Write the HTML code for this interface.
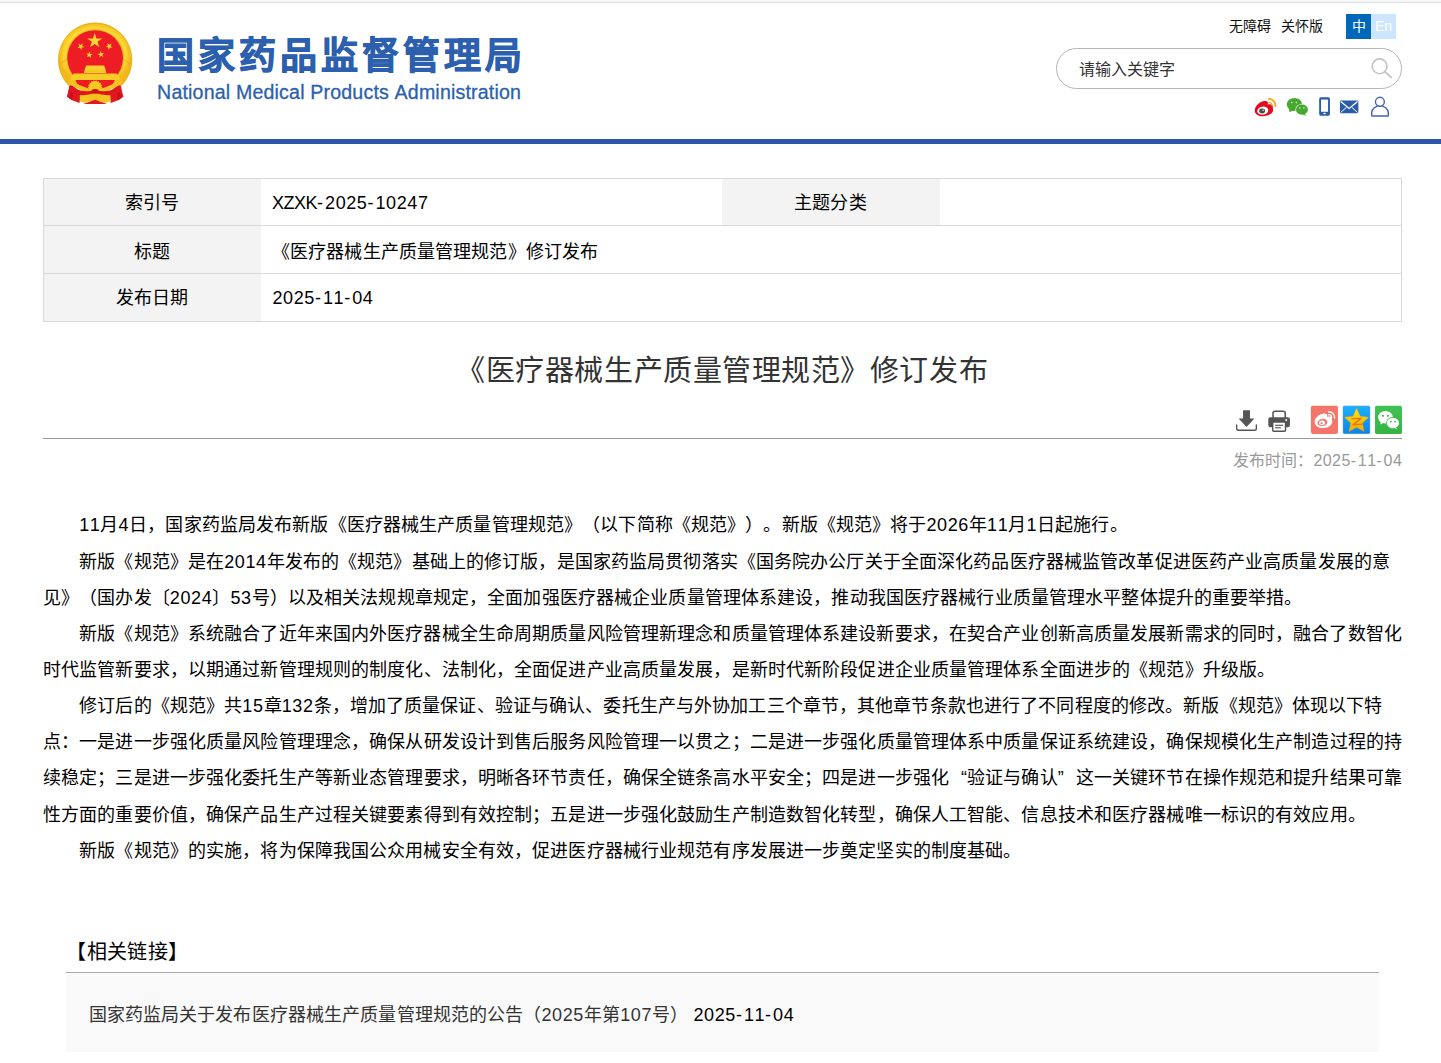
<!DOCTYPE html>
<html lang="zh-CN">
<head>
<meta charset="utf-8">
<title>《医疗器械生产质量管理规范》修订发布</title>
<style>
html,body{margin:0;padding:0;background:#fff;}
body{width:1441px;height:1063px;position:relative;overflow:hidden;font-family:"Liberation Sans",sans-serif;color:#000;font-size:18px;}
.abs{position:absolute;white-space:nowrap;text-spacing-trim:space-all;font-kerning:none;}
.d{letter-spacing:0.6px;}
.h{letter-spacing:2px;}
.L{letter-spacing:-0.5px;}
/* top strip */
#strip1{left:0;top:0;width:1441px;height:2px;background:#f6f7f9;}
#strip2{left:0;top:2px;width:1441px;height:1px;background:#dcdde1;}
/* header */
#logo-cn{left:157px;top:29.2px;font-size:37px;line-height:56px;font-weight:bold;color:#2c5fae;letter-spacing:4px;-webkit-text-stroke:0.9px #2c5fae;}
#logo-en{left:157.1px;top:81.4px;font-size:19.6px;line-height:22px;color:#2c5fae;letter-spacing:0.17px;-webkit-text-stroke:0.3px #2c5fae;}
#lnk1{left:1229px;top:15px;font-size:14px;line-height:22px;color:#111;}
#lnk2{left:1281px;top:15px;font-size:14px;line-height:22px;color:#111;}
#zh{left:1346px;top:14px;width:25px;height:25px;background:#0068b7;color:#fff;font-size:14px;line-height:25px;text-align:center;}
#en{left:1371px;top:14px;width:25px;height:25px;background:#cce6ff;color:#fff;font-size:14px;line-height:25px;text-align:center;}
#search{left:1056px;top:48px;width:344px;height:39px;border:1px solid #b5b5b5;border-radius:21px;background:#fff;}
#search-ph{left:1079px;top:59.3px;font-size:16px;line-height:22px;color:#333;}
#blueline{left:0;top:139px;width:1441px;height:5px;background:#2a57a9;}
/* table */
#tbl{left:43px;top:178px;width:1357px;height:142px;border:1px solid #d9d9d9;background:#fff;}
.labbg{background:#f3f3f3;}
.lab{text-align:center;font-size:18px;line-height:46px;height:46px;color:#000;letter-spacing:0.12px;}
.val{font-size:18px;line-height:46px;height:46px;color:#000;letter-spacing:0.12px;}
.hl{height:1px;background:#d9d9d9;left:44px;width:1357px;}
/* title */
#title{left:0;top:348.8px;width:1444.4px;text-align:center;font-size:29px;line-height:44px;color:#333;letter-spacing:0.55px;}
#hr{left:43px;top:438px;width:1359px;height:1px;background:#999;}
#pub{left:1202px;top:449.6px;width:200.3px;text-align:right;font-size:16px;line-height:22px;color:#999;}
#pub .d{letter-spacing:0.45px;}
#pub .h{letter-spacing:1.7px;}
/* body lines */
.ln{left:43px;letter-spacing:0.12px;font-size:18px;line-height:36px;height:36px;color:#000;}
.ind{padding-left:36.24px;}
.q{display:inline-block;width:18.12px;text-align-last:auto;}
/* related */
#rel-h{left:66.4px;top:936.8px;font-size:20px;line-height:30px;color:#000;letter-spacing:0.3px;}
#rel-line{left:66px;top:972px;width:1313px;height:1px;background:#aaa;}
#rel-box{left:66px;top:973px;width:1313px;height:79px;background:#f9f9f9;}
#rel-a{left:88.5px;top:996.8px;font-size:18px;line-height:36px;color:#333;letter-spacing:0.12px;}
#rel-a b{font-weight:normal;color:#000;}
/* baked extents */
#L1{left:42.994px !important;width:1048.138px !important;text-align:justify !important;text-align-last:justify !important;}
#L2{left:42.994px !important;width:1310.575px !important;text-align:justify !important;text-align-last:justify !important;}
#L3{left:43.000px !important;width:1259.325px !important;text-align:justify !important;text-align-last:justify !important;}
#L4{left:42.994px !important;width:1322.466px !important;text-align:justify !important;text-align-last:justify !important;}
#L5{left:43.000px !important;width:1231.872px !important;text-align:justify !important;text-align-last:justify !important;}
#L6{left:42.994px !important;width:1303.091px !important;text-align:justify !important;text-align-last:justify !important;}
#L7{left:43.000px !important;width:1358.700px !important;text-align:justify !important;text-align-last:justify !important;}
#L8{left:43.000px !important;width:1358.700px !important;text-align:justify !important;text-align-last:justify !important;}
#L9{left:43.000px !important;width:1322.466px !important;text-align:justify !important;text-align-last:justify !important;}
#L10{left:42.994px !important;width:941.950px !important;text-align:justify !important;text-align-last:justify !important;}
#title{left:456.234px !important;width:531.606px !important;text-align:justify !important;text-align-last:justify !important;}
#rel-a{left:88.500px !important;width:705.544px !important;text-align:justify !important;text-align-last:justify !important;}
#rel-h{left:66.391px !important;width:121.513px !important;text-align:justify !important;text-align-last:justify !important;}
#logo-cn{left:157.000px !important;width:368.700px !important;text-align:justify !important;text-align-last:justify !important;}
#logo-en{left:157.094px !important;width:363.716px !important;text-align:justify !important;text-align-last:justify !important;}
#lnk1{left:1229.000px !important;width:41.700px !important;text-align:justify !important;text-align-last:justify !important;}
#lnk2{left:1281.000px !important;width:41.700px !important;text-align:justify !important;text-align-last:justify !important;}
#search-ph{left:1079.000px !important;width:95.700px !important;text-align:justify !important;text-align-last:justify !important;}
#pub{left:1233.422px !important;width:168.575px !important;text-align:justify !important;text-align-last:justify !important;}
#T1{left:124.703px !important;width:54.075px !important;text-align:justify !important;text-align-last:justify !important;}
#T2{left:272.000px !important;width:156.231px !important;text-align:justify !important;text-align-last:justify !important;}
#T3{left:794.141px !important;width:72.184px !important;text-align:justify !important;text-align-last:justify !important;}
#T4{left:133.766px !important;width:35.950px !important;text-align:justify !important;text-align-last:justify !important;}
#T5{left:272.000px !important;width:325.872px !important;text-align:justify !important;text-align-last:justify !important;}
#T6{left:115.641px !important;width:72.184px !important;text-align:justify !important;text-align-last:justify !important;}
#T7{left:272.500px !important;width:100.622px !important;text-align:justify !important;text-align-last:justify !important;}
</style>
</head>
<body>
<div class="abs" id="strip1"></div><div class="abs" id="strip2"></div>

<!--EMBLEM_START--><svg class="abs" id="emblem" style="left:50px;top:15px;width:90px;height:95px" viewBox="0 0 1007 1063">
<defs>
<radialGradient id="gr" cx="50%" cy="50%" r="50%"><stop offset="0.72" stop-color="#f6c21c"/><stop offset="0.8" stop-color="#fbd93a"/><stop offset="0.9" stop-color="#f7cb26"/><stop offset="1" stop-color="#f2b71a"/></radialGradient>
</defs>
<!-- ribbons behind -->
<path d="M225 770 L188 915 L240 950 L330 985 L345 860 Z" fill="#e2181f"/>
<path d="M782 770 L822 915 L770 950 L680 985 L665 860 Z" fill="#e2181f"/>
<path d="M235 800 L215 930 L250 950 L262 830Z" fill="#c9101a"/>
<path d="M775 800 L795 930 L760 950 L748 830Z" fill="#c9101a"/>
<!-- gold ring -->
<path d="M505 85 A415 415 0 0 1 800 790 L210 790 A415 415 0 0 1 505 85Z" fill="url(#gr)"/>
<path d="M211 790 A411 411 0 1 1 799 790" fill="none" stroke="#e6a818" stroke-width="9" opacity="0.75"/><circle cx="505" cy="482" r="318" fill="none" stroke="#e9ae1a" stroke-width="10" opacity="0.8"/><path d="M150 300 L112 540 M860 300 L898 540" stroke="#e9b01c" stroke-width="10" opacity="0.55" fill="none"/><path d="M105 555 L225 470 M905 555 L785 470" stroke="#e2a416" stroke-width="12" opacity="0.6" fill="none"/>
<!-- red disk -->
<circle cx="505" cy="482" r="312" fill="#ee1c25"/>
<!-- stars -->
<polygon points="500.0,202.0 519.8,262.8 583.7,262.8 532.0,300.4 551.7,361.2 500.0,323.6 448.3,361.2 468.0,300.4 416.3,262.8 480.2,262.8" fill="#fbd52e"/>
<polygon points="366.0,315.6 359.7,345.5 386.1,360.7 355.7,363.9 349.4,393.8 337.0,365.9 306.6,369.1 329.3,348.7 316.9,320.8 343.3,336.0" fill="#fbd52e"/>
<polygon points="641.0,313.6 663.7,334.0 690.1,318.8 677.7,346.7 700.4,367.1 670.0,363.9 657.6,391.8 651.3,361.9 620.9,358.7 647.3,343.5" fill="#fbd52e"/>
<polygon points="446.9,406.6 451.0,435.4 479.6,440.4 453.5,453.2 457.5,482.0 437.3,461.0 411.2,473.8 424.9,448.1 404.7,427.2 433.3,432.3" fill="#fbd52e"/>
<polygon points="563.1,402.6 576.7,428.3 605.3,423.2 585.1,444.1 598.8,469.8 572.7,457.0 552.5,478.0 556.5,449.2 530.4,436.4 559.0,431.4" fill="#fbd52e"/>
<!-- gate -->
<path d="M405 565 L605 565 L618 600 L630 650 L380 650 L392 600Z" fill="#f9d12c"/>
<rect x="385" y="618" width="240" height="14" fill="#eebf22"/>
<!-- base band with curved ends -->
<path d="M265 655 L745 655 Q775 680 790 730 L735 735 L275 735 L220 730 Q235 680 265 655Z" fill="#f8cb27"/>
<!-- lower red field -->
<path d="M285 728 L725 728 L690 800 L505 870 L320 800Z" fill="#ec1b24"/>
<!-- gear -->
<polygon points="589.0,812.0 573.9,824.2 583.9,840.7 565.6,847.0 569.3,866.0 550.0,865.6 547.0,884.7 528.9,877.8 519.6,894.7 505.0,882.0 490.4,894.7 481.1,877.8 463.0,884.7 460.0,865.6 440.7,866.0 444.4,847.0 426.1,840.7 436.1,824.2 421.0,812.0 436.1,799.8 426.1,783.3 444.4,777.0 440.7,758.0 460.0,758.4 463.0,739.3 481.1,746.2 490.4,729.3 505.0,742.0 519.6,729.3 528.9,746.2 547.0,739.3 550.0,758.4 569.3,758.0 565.6,777.0 583.9,783.3 573.9,799.8" fill="#f7c823"/>
<!-- gold swoosh stalks -->
<path d="M225 705 Q300 800 505 838 Q710 800 785 705 L800 760 Q700 850 505 880 Q310 850 210 760Z" fill="#f6c320"/>
<!-- lower gear and cross -->
<path d="M332 900 L430 868 L505 915 L580 868 L678 900 L674 968 L612 985 L505 945 L398 985 L336 968Z" fill="#f6c522"/>
<polygon points="585.0,905.0 571.0,916.6 580.2,932.4 563.0,938.5 566.3,956.4 548.1,956.3 545.0,974.3 527.9,968.0 518.9,983.8 505.0,972.0 491.1,983.8 482.1,968.0 465.0,974.3 461.9,956.3 443.7,956.4 447.0,938.5 429.8,932.4 439.0,916.6 425.0,905.0 439.0,893.4 429.8,877.6 447.0,871.5 443.7,853.6 461.9,853.7 465.0,835.7 482.1,842.0 491.1,826.2 505.0,838.0 518.9,826.2 527.9,842.0 545.0,835.7 548.1,853.7 566.3,853.6 563.0,871.5 580.2,877.6 571.0,893.4" fill="#f5c01e"/>
<path d="M372 995 L505 948 L638 995 Z" fill="#e3171f"/>
<!-- red ribbon centre drape -->
<path d="M215 788 Q340 882 505 838 Q670 882 795 788 L800 850 Q680 930 505 874 Q330 930 210 850Z" fill="#e0161e"/>
<path d="M468 836 Q505 822 542 836 L546 874 Q505 888 464 874Z" fill="#cf111a"/>
</svg><!--EMBLEM_END-->

<div class="abs" id="logo-cn">国家药品监督管理局</div>
<div class="abs" id="logo-en">National Medical Products Administration</div>

<div class="abs" id="lnk1">无障碍</div>
<div class="abs" id="lnk2">关怀版</div>
<div class="abs" id="zh">中</div>
<div class="abs" id="en">En</div>
<div class="abs" id="search"></div>
<div class="abs" id="search-ph">请输入关键字</div>
<!--MAG_START--><svg class="abs" id="mag" style="left:1366px;top:54px;width:30px;height:30px" viewBox="0 0 30 30">
<circle cx="13.6" cy="12.3" r="7.4" fill="none" stroke="#c4c4c4" stroke-width="1.6"/>
<path d="M19 17.8 L25.2 23.4" stroke="#c4c4c4" stroke-width="1.8" stroke-linecap="round"/>
</svg><!--MAG_END-->
<!--ICONS_START--><svg class="abs" id="icons" style="left:1245px;top:90px;width:160px;height:34px" viewBox="0 0 1441 306">
<!-- weibo -->
<path d="M88 188 C86 140 145 92 188 100 C208 104 210 118 204 132 C232 120 258 134 250 162 C268 200 222 236 165 236 C118 236 90 216 88 188Z" fill="#e60b1c"/>
<ellipse cx="160" cy="186" rx="50" ry="36" fill="#fff" transform="rotate(-8 160 186)"/>
<ellipse cx="154" cy="189" rx="27" ry="22" fill="#4a4a4a"/>
<ellipse cx="163" cy="182" rx="8" ry="6" fill="#ddd"/>
<path d="M214 80 A60 60 0 0 1 274 146" fill="none" stroke="#f5a91d" stroke-width="17" stroke-linecap="round"/>
<path d="M214 112 A30 30 0 0 1 244 142" fill="none" stroke="#f5a91d" stroke-width="12" stroke-linecap="round"/>
<!-- wechat -->
<ellipse cx="445" cy="130" rx="68" ry="59" fill="#46a82e"/>
<path d="M398 165 L400 200 L436 182Z" fill="#46a82e"/>
<ellipse cx="513" cy="176" rx="59" ry="51" fill="#fff"/>
<ellipse cx="513" cy="176" rx="54" ry="46" fill="#46a82e"/>
<path d="M535 212 L553 234 L520 220Z" fill="#46a82e"/>
<circle cx="421" cy="112" r="7" fill="#fff"/><circle cx="463" cy="112" r="7" fill="#fff"/>
<circle cx="494" cy="162" r="6" fill="#fff"/><circle cx="531" cy="162" r="6" fill="#fff"/>
<!-- phone -->
<rect x="668" y="65" width="97" height="166" rx="15" fill="#2a5caa"/>
<rect x="685" y="86" width="63" height="110" fill="#fff"/>
<rect x="706" y="205" width="21" height="13" rx="4" fill="#fff"/>
<!-- mail -->
<rect x="855" y="95" width="166" height="114" rx="9" fill="#2a5caa"/>
<path d="M862 104 L938 166 L1014 104" fill="none" stroke="#fff" stroke-width="12"/>
<path d="M862 202 L914 156 M1014 202 L962 156" fill="none" stroke="#fff" stroke-width="9"/>
<!-- user -->
<circle cx="1215" cy="106" r="40" fill="none" stroke="#4762b0" stroke-width="13"/>
<path d="M1188 148 C1150 162 1136 196 1142 234 L1290 234 C1296 196 1280 162 1242 148" fill="none" stroke="#4762b0" stroke-width="13" stroke-linejoin="round" stroke-linecap="round"/>
</svg><!--ICONS_END-->
<div class="abs" id="blueline"></div>

<div class="abs" id="tbl"></div>
<div class="abs labbg" style="left:44px;top:179px;width:217px;height:142px;"></div>
<div class="abs labbg" style="left:722px;top:179px;width:218px;height:46px;"></div>
<div class="abs hl" style="top:225px;"></div>
<div class="abs hl" style="top:273px;"></div>
<div id="T1" class="abs lab" style="left:43.4px;top:180.3px;width:217px;">索引号</div>
<div id="T2" class="abs val" style="left:272px;top:179.5px;"><span class="L">XZXK</span><span class="h">-</span><span class="d">2025</span><span class="h">-</span><span class="d">10247</span></div>
<div id="T3" class="abs lab" style="left:721.4px;top:180.3px;width:218px;">主题分类</div>
<div id="T4" class="abs lab" style="left:43.4px;top:228.7px;width:217px;">标题</div>
<div id="T5" class="abs val" style="left:272px;top:228.5px;">《医疗器械生产质量管理规范》修订发布</div>
<div id="T6" class="abs lab" style="left:43.4px;top:275.4px;width:217px;">发布日期</div>
<div id="T7" class="abs val" style="left:272.5px;top:274.6px;"><span class="d">2025</span><span class="h">-</span><span class="d">11</span><span class="h">-</span><span class="d">04</span></div>

<div class="abs" id="title">《医疗器械生产质量管理规范》修订发布</div>
<!--TOOLS_START--><svg class="abs" id="tools" style="left:1220px;top:395px;width:200px;height:85px" viewBox="0 0 1441 612">
<defs>
<linearGradient id="qz" x1="0" y1="0" x2="0" y2="1"><stop offset="0" stop-color="#1cb0fd"/><stop offset="1" stop-color="#0a86e2"/></linearGradient>
<linearGradient id="wx" x1="0" y1="0" x2="0" y2="1"><stop offset="0" stop-color="#42c254"/><stop offset="1" stop-color="#36b345"/></linearGradient>
<linearGradient id="st" x1="0" y1="0" x2="0" y2="1"><stop offset="0" stop-color="#ffe600"/><stop offset="1" stop-color="#f6a511"/></linearGradient>
</defs>
<!-- download -->
<path d="M166 110 L216 110 L216 170 L248 170 L191 230 L134 170 L166 170Z" fill="#555"/>
<path d="M120 216 L120 243 Q120 254 131 254 L251 254 Q262 254 262 243 L262 216" fill="none" stroke="#555" stroke-width="10" stroke-linecap="round"/>
<!-- print -->
<path d="M382 168 L382 130 Q382 117 395 117 L457 117 Q470 117 470 130 L470 168" fill="none" stroke="#555" stroke-width="11"/>
<rect x="348" y="160" width="156" height="72" rx="16" fill="#555"/>
<rect x="380" y="195" width="92" height="66" rx="5" fill="#fff" stroke="#555" stroke-width="10"/>
<rect x="397" y="214" width="58" height="8" fill="#555"/><rect x="397" y="232" width="42" height="8" fill="#555"/>
<circle cx="477" cy="180" r="7" fill="#fff"/>
<!-- weibo share -->
<rect x="655" y="78" width="195" height="202" rx="13" fill="#f4766b"/>
<path d="M682 196 C680 160 726 128 760 134 C776 137 776 148 772 158 C794 150 812 160 806 182 C818 212 784 238 742 238 C706 238 684 220 682 196Z" fill="#fff"/>
<ellipse cx="738" cy="198" rx="36" ry="26" fill="#f4766b" transform="rotate(-8 738 198)"/>
<ellipse cx="735" cy="200" rx="22" ry="17" fill="#fff"/>
<ellipse cx="732" cy="203" rx="8" ry="7" fill="#f4766b"/>
<path d="M782 120 A44 44 0 0 1 826 166" fill="none" stroke="#fff" stroke-width="10" stroke-linecap="round"/>
<path d="M782 142 A22 22 0 0 1 804 164" fill="none" stroke="#fff" stroke-width="9" stroke-linecap="round"/>
<!-- qzone -->
<rect x="888" y="80" width="191" height="198" rx="9" fill="url(#qz)" stroke="#0b76da" stroke-width="4"/>
<polygon points="984.0,96.0 1009.9,152.4 1071.5,159.6 1025.8,201.6 1038.1,262.4 984.0,232.0 929.9,262.4 942.2,201.6 896.5,159.6 958.1,152.4" fill="url(#st)" stroke="#f3a010" stroke-width="3" stroke-linejoin="round"/>
<path d="M950 170 L1018 168 L958 214 L1024 210" fill="none" stroke="#e07a12" stroke-width="10" stroke-linejoin="round" stroke-linecap="round"/>
<!-- wechat share -->
<rect x="1117" y="78" width="194" height="202" rx="12" fill="url(#wx)"/>
<ellipse cx="1192" cy="160" rx="53" ry="45" fill="#fff"/>
<path d="M1158 186 L1156 212 L1184 198Z" fill="#fff"/>
<ellipse cx="1246" cy="202" rx="49" ry="43" fill="#3cb94b"/>
<ellipse cx="1246" cy="202" rx="44" ry="38" fill="#fff"/>
<path d="M1262 228 L1278 246 L1250 234Z" fill="#fff"/>
<circle cx="1174" cy="150" r="7.5" fill="#3cb94b"/><circle cx="1210" cy="150" r="7.5" fill="#3cb94b"/>
<circle cx="1231" cy="192" r="6.5" fill="#3cb94b"/><circle cx="1262" cy="192" r="6.5" fill="#3cb94b"/>
</svg><!--TOOLS_END-->
<div class="abs" id="hr"></div>
<div class="abs" id="pub">发布时间：<span class="d">2025</span><span class="h">-</span><span class="d">11</span><span class="h">-</span><span class="d">04</span></div>

<div class="abs ln ind" id="L1" style="top:507.40px;"><span class="d">11</span>月<span class="d">4</span>日，国家药监局发布新版《医疗器械生产质量管理规范》（以下简称《规范》）。新版《规范》将于<span class="d">2026</span>年<span class="d">11</span>月<span class="d">1</span>日起施行。</div>
<div class="abs ln ind" id="L2" style="top:543.55px;">新版《规范》是在<span class="d">2014</span>年发布的《规范》基础上的修订版，是国家药监局贯彻落实《国务院办公厅关于全面深化药品医疗器械监管改革促进医药产业高质量发展的意</div>
<div class="abs ln" id="L3" style="top:579.70px;">见》（国办发〔<span class="d">2024</span>〕<span class="d">53</span>号）以及相关法规规章规定，全面加强医疗器械企业质量管理体系建设，推动我国医疗器械行业质量管理水平整体提升的重要举措。</div>
<div class="abs ln ind" id="L4" style="top:615.85px;">新版《规范》系统融合了近年来国内外医疗器械全生命周期质量风险管理新理念和质量管理体系建设新要求，在契合产业创新高质量发展新需求的同时，融合了数智化</div>
<div class="abs ln" id="L5" style="top:652.00px;">时代监管新要求，以期通过新管理规则的制度化、法制化，全面促进产业高质量发展，是新时代新阶段促进企业质量管理体系全面进步的《规范》升级版。</div>
<div class="abs ln ind" id="L6" style="top:688.15px;">修订后的《规范》共<span class="d">15</span>章<span class="d">132</span>条，增加了质量保证、验证与确认、委托生产与外协加工三个章节，其他章节条款也进行了不同程度的修改。新版《规范》体现以下特</div>
<div class="abs ln" id="L7" style="top:724.30px;">点：一是进一步强化质量风险管理理念，确保从研发设计到售后服务风险管理一以贯之；二是进一步强化质量管理体系中质量保证系统建设，确保规模化生产制造过程的持</div>
<div class="abs ln" id="L8" style="top:760.45px;">续稳定；三是进一步强化委托生产等新业态管理要求，明晰各环节责任，确保全链条高水平安全；四是进一步强化<span class="q" style="text-align:right">“</span>验证与确认<span class="q" style="text-align:left">”</span>这一关键环节在操作规范和提升结果可靠</div>
<div class="abs ln" id="L9" style="top:796.60px;">性方面的重要价值，确保产品生产过程关键要素得到有效控制；五是进一步强化鼓励生产制造数智化转型，确保人工智能、信息技术和医疗器械唯一标识的有效应用。</div>
<div class="abs ln ind" id="L10" style="top:832.75px;">新版《规范》的实施，将为保障我国公众用械安全有效，促进医疗器械行业规范有序发展进一步奠定坚实的制度基础。</div>


<div class="abs" id="rel-h">【相关链接】</div>
<div class="abs" id="rel-line"></div>
<div class="abs" id="rel-box"></div>
<div class="abs" id="rel-a">国家药监局关于发布医疗器械生产质量管理规范的公告（<span class="d">2025</span>年第<span class="d">107</span>号） <b><span class="d">2025</span><span class="h">-</span><span class="d">11</span><span class="h">-</span><span class="d">04</span></b></div>
</body>
</html>
